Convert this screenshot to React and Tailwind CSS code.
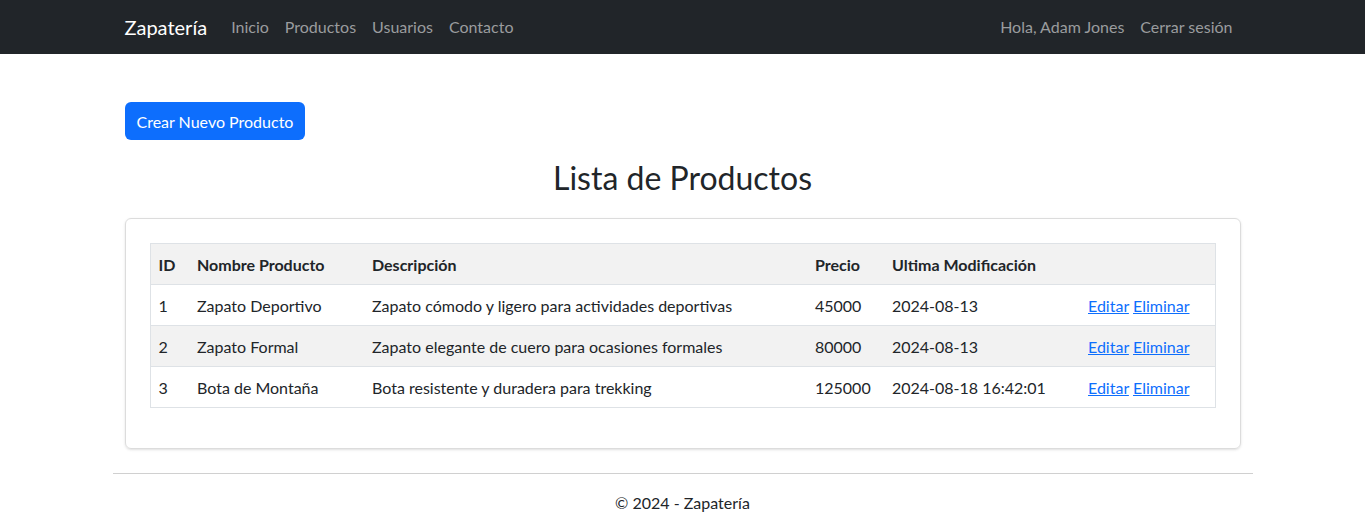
const productos = [
  { id: 1, nombre: "Zapato Deportivo", descripcion: "Zapato cómodo y ligero para actividades deportivas", precio: 45000, fecha: "2024-08-13" },
  { id: 2, nombre: "Zapato Formal", descripcion: "Zapato elegante de cuero para ocasiones formales", precio: 80000, fecha: "2024-08-13" },
  { id: 3, nombre: "Bota de Montaña", descripcion: "Bota resistente y duradera para trekking", precio: 125000, fecha: "2024-08-18 16:42:01" },
]

export default function App() {
  return (
    <div className="min-h-screen bg-white text-[#212529] text-base leading-6 font-['Lato','Liberation_Sans',sans-serif]">
      <nav className="bg-[#212529] h-[54px]">
        <div className="max-w-[1140px] mx-auto px-3 h-full flex items-center">
          <a href="#" className="text-white text-xl mr-4 leading-[30px]">Zapatería</a>
          <div className="flex">
            {["Inicio", "Productos", "Usuarios", "Contacto"].map(l => (
              <a key={l} href="#" className="px-2 py-2 text-[#9a9c9e]">{l}</a>
            ))}
          </div>
          <div className="ml-auto flex">
            <span className="px-2 py-2 text-[#9a9c9e]">Hola, Adam Jones</span>
            <a href="#" className="px-2 py-2 text-[#9a9c9e]">Cerrar sesión</a>
          </div>
        </div>
      </nav>

      <main className="max-w-[1140px] mx-auto px-3">
        <div className="pt-12">
          <button className="bg-[#0d6efd] text-white px-3 pt-[7px] pb-[5px] rounded-md h-[38px]">
            Crear Nuevo Producto
          </button>
        </div>
        <h2 className="text-center text-[32px] leading-[38px] mt-[19px]">Lista de Productos</h2>
        <div className="mt-[21px] border border-[#dcdcdc] rounded-md shadow-sm p-6">
          <table className="w-full border border-[#dee2e6] border-collapse mb-4">
            <thead>
              <tr className="bg-[#f2f2f2] border-b border-[#dee2e6]">
                <th className="text-left font-bold px-2 pt-[9px] pb-[7px] w-[39px] h-[41px]">ID</th>
                <th className="text-left font-bold px-2 pt-[9px] pb-[7px] w-[175px]">Nombre Producto</th>
                <th className="text-left font-bold px-2 pt-[9px] pb-[7px] w-[443px]">Descripción</th>
                <th className="text-left font-bold px-2 pt-[9px] pb-[7px] w-[77px]">Precio</th>
                <th className="text-left font-bold px-2 pt-[9px] pb-[7px] w-[196px]">Ultima Modificación</th>
                <th className="p-2"></th>
              </tr>
            </thead>
            <tbody>
              {productos.map((p, i) => (
                <tr key={p.id} className={(i % 2 === 1 ? "bg-[#f2f2f2] " : "bg-white ") + "border-b border-[#dee2e6]"}>
                  <td className="px-2 pt-[9px] pb-[7px]">{p.id}</td>
                  <td className="px-2 pt-[9px] pb-[7px]">{p.nombre}</td>
                  <td className="px-2 pt-[9px] pb-[7px]">{p.descripcion}</td>
                  <td className="px-2 pt-[9px] pb-[7px]">{p.precio}</td>
                  <td className="px-2 pt-[9px] pb-[7px]">{p.fecha}</td>
                  <td className="px-2 pt-[9px] pb-[7px]">
                    <a href="#" className="text-[#0d6efd] underline">Editar</a>{" "}
                    <a href="#" className="text-[#0d6efd] underline">Eliminar</a>
                  </td>
                </tr>
              ))}
            </tbody>
          </table>
        </div>
      </main>

      <footer className="max-w-[1140px] mx-auto mt-6 border-t border-[#d0d0d0] pt-[17px] pb-4 text-center">
        © 2024 - Zapatería
      </footer>
    </div>
  )
}
